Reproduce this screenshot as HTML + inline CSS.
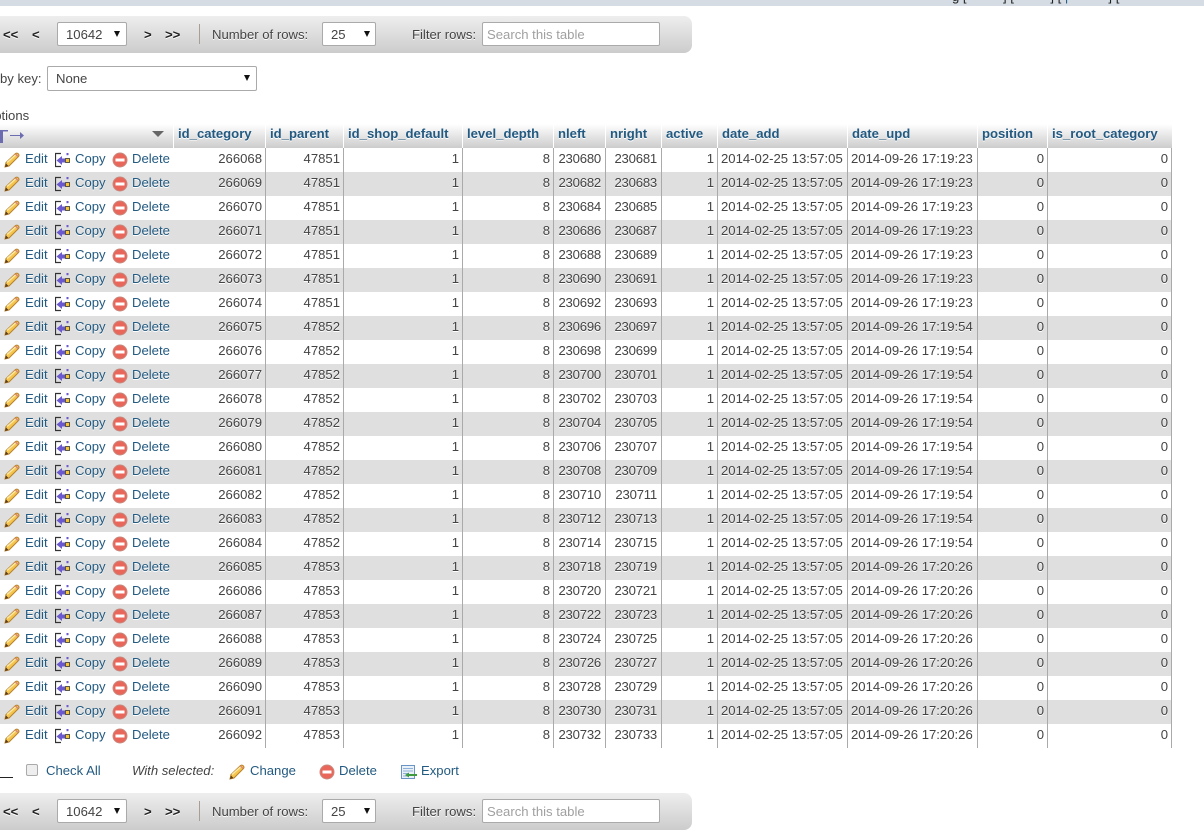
<!DOCTYPE html>
<html>
<head>
<meta charset="utf-8">
<style>
html,body{margin:0;padding:0;background:#fff;}
body{width:1204px;height:832px;overflow:hidden;position:relative;font-family:"Liberation Sans",Arial,sans-serif;font-size:13.12px;color:#444;}
.top{position:absolute;left:0;top:0;width:1204px;height:6px;background:#d5dce4;overflow:hidden;}
.nav{position:absolute;left:-10px;width:702px;height:37px;background:linear-gradient(#eeeeee,#cccccc);border-radius:0 8px 8px 0;}
.a{position:absolute;white-space:nowrap;line-height:16px;}
.b{font-weight:bold;color:#222;text-shadow:0 1px 0 #fff;}
.sel{position:absolute;box-sizing:border-box;background:#fff;border:1px solid #aaa;border-radius:2px;height:24px;line-height:24px;color:#444;padding-left:8px;}
.sel i{position:absolute;top:8px;width:0;height:0;border-left:3px solid transparent;border-right:3px solid transparent;border-top:6px solid #111;}
.sh{text-shadow:0 1px 0 #fff;}
table{position:absolute;left:0;top:124px;border-collapse:separate;border-spacing:0;table-layout:fixed;width:1172px;}
th{height:24px;box-sizing:border-box;padding:0 4px;text-align:left;font-weight:bold;color:#235a81;background:linear-gradient(#ffffff,#cccccc);border-right:1px solid #fff;white-space:nowrap;overflow:hidden;font-size:13.12px;vertical-align:middle;padding-bottom:6px;text-shadow:0 1px 0 #fff;}
th.l{border-right:0;}
td{height:24px;box-sizing:border-box;padding:0 3px 4px 0;text-align:right;border-right:1px solid #aaa;white-space:nowrap;color:#444;text-shadow:0 1px 0 #fff;vertical-align:middle;}
td.o{border-right:1px solid transparent;position:relative;padding:0;}
td.o svg{position:absolute;top:4px;width:16px;height:16px;}
td.o svg:nth-of-type(1){left:4px;}
td.o svg:nth-of-type(2){left:55px;}
td.o svg:nth-of-type(3){left:112px;}
td.o span{position:absolute;top:3px;color:#235a81;line-height:16px;}
td.o span:nth-of-type(1){left:25px;}
td.o span:nth-of-type(2){left:75px;}
td.o span:nth-of-type(3){left:132px;}
tbody tr:nth-child(odd) td{background:#fff;}
tbody tr:nth-child(even) td{background:#dfdfdf;}
td.d{text-align:left;padding-left:3px;padding-right:0;}
td.n{padding-right:4px;letter-spacing:-.2px;}
.lnk{color:#235a81;}
</style>
</head>
<body>
<svg width="0" height="0" style="position:absolute">
<defs>
<symbol id="pen" viewBox="0 0 16 16">
<path d="M1 15 L2 10.5 L11.5 1.5 Q13 .5 14.5 2 Q15.5 3.500 14.500 4.500 L5 14 Z" fill="#f5c64f" stroke="#b8802a" stroke-width="1"/>
<path d="M3 10.500 L12 2.500" stroke="#fbe9a8" stroke-width="1.500"/>
<path d="M1 15 L2 11.500 L4.500 14 Z" fill="#5a3d1a"/>
<path d="M11.500 2 L14 4.500" stroke="#d98a7a" stroke-width="1.500"/>
</symbol>
<symbol id="cp" viewBox="0 0 16 16">
<path d="M6 1.500 H.5 V14.500 H6" fill="none" stroke="#333" stroke-width="1.200"/>
<path d="M1.500 8.500 L7 4 V6.500 H10 V10.500 H7 V13 Z" fill="#6a5acd"/>
<rect x="10.500" y="6.500" width="4" height="4" fill="#f4c531" stroke="#333" stroke-width=".8"/>
<rect x="11.500" y="1" width="2" height="2.200" fill="#6a5acd"/>
</symbol>
<symbol id="del" viewBox="0 0 16 16">
<circle cx="8" cy="8" r="7" fill="#e8665a" stroke="#c9897e" stroke-width="1"/>
<rect x="3.500" y="6.500" width="9" height="3" fill="#fff"/>
</symbol>
<symbol id="exp" viewBox="0 0 16 16">
<rect x=".5" y="1.500" width="13" height="13" fill="#e8f0f8" stroke="#6b93c4"/>
<path d="M2 4.500 H12 M2 7 H12 M2 9.500 H7 M2 12 H7" stroke="#8fb0d8"/>
<path d="M4 11 L8 8.500 V10 H16 V12 H8 V13.500 Z" fill="#3f9a3f"/>
</symbol>
</defs>
</svg>

<div class="top"><div class="a" style="left:952px;top:-11px;color:#222;white-space:pre;">g [          ] [          ] [<span style="color:#235a81"> |           </span>] [</div></div>

<div class="nav" style="top:16px"></div>
<div class="a b" style="left:3px;top:27px">&lt;&lt;</div>
<div class="a b" style="left:32px;top:27px">&lt;</div>
<div class="sel" style="left:57px;top:22px;width:70px;">10642<i style="left:56px"></i></div>
<div class="a b" style="left:144px;top:27px">&gt;</div>
<div class="a b" style="left:165px;top:27px">&gt;&gt;</div>
<div class="a" style="left:199px;top:24px;width:1px;height:20px;background:#a89f94"></div>
<div class="a sh" style="left:212px;top:27px">Number of rows:</div>
<div class="sel" style="left:322px;top:22px;width:54px;">25<i style="left:41px"></i></div>
<div class="a sh" style="left:412px;top:27px">Filter rows:</div>
<div class="sel" style="left:482px;top:22px;width:178px;padding-left:4px;color:#a0a0a0;">Search this table</div>

<div class="a" style="left:0;top:71px;">by key:</div>
<div class="sel" style="left:47px;top:66px;width:210px;height:25px;line-height:23px;">None<i style="left:196px"></i></div>
<div class="a" style="left:-16px;top:108px;color:#444;">Options</div>

<table>
<colgroup><col style="width:174px"><col style="width:92px"><col style="width:78px"><col style="width:119px"><col style="width:91px"><col style="width:52px"><col style="width:56px"><col style="width:56px"><col style="width:130px"><col style="width:130px"><col style="width:70px"><col style="width:124px"></colgroup>
<thead><tr>
<th style="position:relative"><svg style="position:absolute;left:152px;top:7px" width="12" height="6" viewBox="0 0 12 6"><path d="M0 0 H12 L6 6 Z" fill="#666"/></svg></th>
<th>id_category</th><th>id_parent</th><th>id_shop_default</th><th>level_depth</th><th>nleft</th><th>nright</th><th>active</th><th>date_add</th><th>date_upd</th><th>position</th><th class="l">is_root_category</th>
</tr></thead>
<tbody>
<tr><td class="o"><svg><use href="#pen"/></svg><span>Edit</span><svg><use href="#cp"/></svg><span>Copy</span><svg><use href="#del"/></svg><span>Delete</span></td><td>266068</td><td>47851</td><td>1</td><td>8</td><td class="n">230680</td><td class="n">230681</td><td>1</td><td class="d">2014-02-25 13:57:05</td><td class="d">2014-09-26 17:19:23</td><td>0</td><td>0</td></tr>
<tr><td class="o"><svg><use href="#pen"/></svg><span>Edit</span><svg><use href="#cp"/></svg><span>Copy</span><svg><use href="#del"/></svg><span>Delete</span></td><td>266069</td><td>47851</td><td>1</td><td>8</td><td class="n">230682</td><td class="n">230683</td><td>1</td><td class="d">2014-02-25 13:57:05</td><td class="d">2014-09-26 17:19:23</td><td>0</td><td>0</td></tr>
<tr><td class="o"><svg><use href="#pen"/></svg><span>Edit</span><svg><use href="#cp"/></svg><span>Copy</span><svg><use href="#del"/></svg><span>Delete</span></td><td>266070</td><td>47851</td><td>1</td><td>8</td><td class="n">230684</td><td class="n">230685</td><td>1</td><td class="d">2014-02-25 13:57:05</td><td class="d">2014-09-26 17:19:23</td><td>0</td><td>0</td></tr>
<tr><td class="o"><svg><use href="#pen"/></svg><span>Edit</span><svg><use href="#cp"/></svg><span>Copy</span><svg><use href="#del"/></svg><span>Delete</span></td><td>266071</td><td>47851</td><td>1</td><td>8</td><td class="n">230686</td><td class="n">230687</td><td>1</td><td class="d">2014-02-25 13:57:05</td><td class="d">2014-09-26 17:19:23</td><td>0</td><td>0</td></tr>
<tr><td class="o"><svg><use href="#pen"/></svg><span>Edit</span><svg><use href="#cp"/></svg><span>Copy</span><svg><use href="#del"/></svg><span>Delete</span></td><td>266072</td><td>47851</td><td>1</td><td>8</td><td class="n">230688</td><td class="n">230689</td><td>1</td><td class="d">2014-02-25 13:57:05</td><td class="d">2014-09-26 17:19:23</td><td>0</td><td>0</td></tr>
<tr><td class="o"><svg><use href="#pen"/></svg><span>Edit</span><svg><use href="#cp"/></svg><span>Copy</span><svg><use href="#del"/></svg><span>Delete</span></td><td>266073</td><td>47851</td><td>1</td><td>8</td><td class="n">230690</td><td class="n">230691</td><td>1</td><td class="d">2014-02-25 13:57:05</td><td class="d">2014-09-26 17:19:23</td><td>0</td><td>0</td></tr>
<tr><td class="o"><svg><use href="#pen"/></svg><span>Edit</span><svg><use href="#cp"/></svg><span>Copy</span><svg><use href="#del"/></svg><span>Delete</span></td><td>266074</td><td>47851</td><td>1</td><td>8</td><td class="n">230692</td><td class="n">230693</td><td>1</td><td class="d">2014-02-25 13:57:05</td><td class="d">2014-09-26 17:19:23</td><td>0</td><td>0</td></tr>
<tr><td class="o"><svg><use href="#pen"/></svg><span>Edit</span><svg><use href="#cp"/></svg><span>Copy</span><svg><use href="#del"/></svg><span>Delete</span></td><td>266075</td><td>47852</td><td>1</td><td>8</td><td class="n">230696</td><td class="n">230697</td><td>1</td><td class="d">2014-02-25 13:57:05</td><td class="d">2014-09-26 17:19:54</td><td>0</td><td>0</td></tr>
<tr><td class="o"><svg><use href="#pen"/></svg><span>Edit</span><svg><use href="#cp"/></svg><span>Copy</span><svg><use href="#del"/></svg><span>Delete</span></td><td>266076</td><td>47852</td><td>1</td><td>8</td><td class="n">230698</td><td class="n">230699</td><td>1</td><td class="d">2014-02-25 13:57:05</td><td class="d">2014-09-26 17:19:54</td><td>0</td><td>0</td></tr>
<tr><td class="o"><svg><use href="#pen"/></svg><span>Edit</span><svg><use href="#cp"/></svg><span>Copy</span><svg><use href="#del"/></svg><span>Delete</span></td><td>266077</td><td>47852</td><td>1</td><td>8</td><td class="n">230700</td><td class="n">230701</td><td>1</td><td class="d">2014-02-25 13:57:05</td><td class="d">2014-09-26 17:19:54</td><td>0</td><td>0</td></tr>
<tr><td class="o"><svg><use href="#pen"/></svg><span>Edit</span><svg><use href="#cp"/></svg><span>Copy</span><svg><use href="#del"/></svg><span>Delete</span></td><td>266078</td><td>47852</td><td>1</td><td>8</td><td class="n">230702</td><td class="n">230703</td><td>1</td><td class="d">2014-02-25 13:57:05</td><td class="d">2014-09-26 17:19:54</td><td>0</td><td>0</td></tr>
<tr><td class="o"><svg><use href="#pen"/></svg><span>Edit</span><svg><use href="#cp"/></svg><span>Copy</span><svg><use href="#del"/></svg><span>Delete</span></td><td>266079</td><td>47852</td><td>1</td><td>8</td><td class="n">230704</td><td class="n">230705</td><td>1</td><td class="d">2014-02-25 13:57:05</td><td class="d">2014-09-26 17:19:54</td><td>0</td><td>0</td></tr>
<tr><td class="o"><svg><use href="#pen"/></svg><span>Edit</span><svg><use href="#cp"/></svg><span>Copy</span><svg><use href="#del"/></svg><span>Delete</span></td><td>266080</td><td>47852</td><td>1</td><td>8</td><td class="n">230706</td><td class="n">230707</td><td>1</td><td class="d">2014-02-25 13:57:05</td><td class="d">2014-09-26 17:19:54</td><td>0</td><td>0</td></tr>
<tr><td class="o"><svg><use href="#pen"/></svg><span>Edit</span><svg><use href="#cp"/></svg><span>Copy</span><svg><use href="#del"/></svg><span>Delete</span></td><td>266081</td><td>47852</td><td>1</td><td>8</td><td class="n">230708</td><td class="n">230709</td><td>1</td><td class="d">2014-02-25 13:57:05</td><td class="d">2014-09-26 17:19:54</td><td>0</td><td>0</td></tr>
<tr><td class="o"><svg><use href="#pen"/></svg><span>Edit</span><svg><use href="#cp"/></svg><span>Copy</span><svg><use href="#del"/></svg><span>Delete</span></td><td>266082</td><td>47852</td><td>1</td><td>8</td><td class="n">230710</td><td class="n">230711</td><td>1</td><td class="d">2014-02-25 13:57:05</td><td class="d">2014-09-26 17:19:54</td><td>0</td><td>0</td></tr>
<tr><td class="o"><svg><use href="#pen"/></svg><span>Edit</span><svg><use href="#cp"/></svg><span>Copy</span><svg><use href="#del"/></svg><span>Delete</span></td><td>266083</td><td>47852</td><td>1</td><td>8</td><td class="n">230712</td><td class="n">230713</td><td>1</td><td class="d">2014-02-25 13:57:05</td><td class="d">2014-09-26 17:19:54</td><td>0</td><td>0</td></tr>
<tr><td class="o"><svg><use href="#pen"/></svg><span>Edit</span><svg><use href="#cp"/></svg><span>Copy</span><svg><use href="#del"/></svg><span>Delete</span></td><td>266084</td><td>47852</td><td>1</td><td>8</td><td class="n">230714</td><td class="n">230715</td><td>1</td><td class="d">2014-02-25 13:57:05</td><td class="d">2014-09-26 17:19:54</td><td>0</td><td>0</td></tr>
<tr><td class="o"><svg><use href="#pen"/></svg><span>Edit</span><svg><use href="#cp"/></svg><span>Copy</span><svg><use href="#del"/></svg><span>Delete</span></td><td>266085</td><td>47853</td><td>1</td><td>8</td><td class="n">230718</td><td class="n">230719</td><td>1</td><td class="d">2014-02-25 13:57:05</td><td class="d">2014-09-26 17:20:26</td><td>0</td><td>0</td></tr>
<tr><td class="o"><svg><use href="#pen"/></svg><span>Edit</span><svg><use href="#cp"/></svg><span>Copy</span><svg><use href="#del"/></svg><span>Delete</span></td><td>266086</td><td>47853</td><td>1</td><td>8</td><td class="n">230720</td><td class="n">230721</td><td>1</td><td class="d">2014-02-25 13:57:05</td><td class="d">2014-09-26 17:20:26</td><td>0</td><td>0</td></tr>
<tr><td class="o"><svg><use href="#pen"/></svg><span>Edit</span><svg><use href="#cp"/></svg><span>Copy</span><svg><use href="#del"/></svg><span>Delete</span></td><td>266087</td><td>47853</td><td>1</td><td>8</td><td class="n">230722</td><td class="n">230723</td><td>1</td><td class="d">2014-02-25 13:57:05</td><td class="d">2014-09-26 17:20:26</td><td>0</td><td>0</td></tr>
<tr><td class="o"><svg><use href="#pen"/></svg><span>Edit</span><svg><use href="#cp"/></svg><span>Copy</span><svg><use href="#del"/></svg><span>Delete</span></td><td>266088</td><td>47853</td><td>1</td><td>8</td><td class="n">230724</td><td class="n">230725</td><td>1</td><td class="d">2014-02-25 13:57:05</td><td class="d">2014-09-26 17:20:26</td><td>0</td><td>0</td></tr>
<tr><td class="o"><svg><use href="#pen"/></svg><span>Edit</span><svg><use href="#cp"/></svg><span>Copy</span><svg><use href="#del"/></svg><span>Delete</span></td><td>266089</td><td>47853</td><td>1</td><td>8</td><td class="n">230726</td><td class="n">230727</td><td>1</td><td class="d">2014-02-25 13:57:05</td><td class="d">2014-09-26 17:20:26</td><td>0</td><td>0</td></tr>
<tr><td class="o"><svg><use href="#pen"/></svg><span>Edit</span><svg><use href="#cp"/></svg><span>Copy</span><svg><use href="#del"/></svg><span>Delete</span></td><td>266090</td><td>47853</td><td>1</td><td>8</td><td class="n">230728</td><td class="n">230729</td><td>1</td><td class="d">2014-02-25 13:57:05</td><td class="d">2014-09-26 17:20:26</td><td>0</td><td>0</td></tr>
<tr><td class="o"><svg><use href="#pen"/></svg><span>Edit</span><svg><use href="#cp"/></svg><span>Copy</span><svg><use href="#del"/></svg><span>Delete</span></td><td>266091</td><td>47853</td><td>1</td><td>8</td><td class="n">230730</td><td class="n">230731</td><td>1</td><td class="d">2014-02-25 13:57:05</td><td class="d">2014-09-26 17:20:26</td><td>0</td><td>0</td></tr>
<tr><td class="o"><svg><use href="#pen"/></svg><span>Edit</span><svg><use href="#cp"/></svg><span>Copy</span><svg><use href="#del"/></svg><span>Delete</span></td><td>266092</td><td>47853</td><td>1</td><td>8</td><td class="n">230732</td><td class="n">230733</td><td>1</td><td class="d">2014-02-25 13:57:05</td><td class="d">2014-09-26 17:20:26</td><td>0</td><td>0</td></tr>
</tbody>
</table>

<svg class="a" style="left:0;top:128px;z-index:2" width="26" height="18" viewBox="0 0 26 18">
<path d="M0 2 H8 V3.500 H3 V15 H0 Z" fill="#6c6cb0"/>
<path d="M10 7.500 H23" stroke="#6c6cb0" stroke-width="1"/>
<path d="M20 4 L24 7.500 L20 11 Z" fill="#6c6cb0"/>
</svg>

<div class="a" style="left:0;top:777px;width:13px;height:1px;background:#222"></div>
<div class="a" style="left:26px;top:764px;width:12px;height:12px;box-sizing:border-box;border:1px solid #aaa;border-radius:2px;background:#eee"></div>
<div class="a lnk" style="left:46px;top:763px">Check All</div>
<div class="a" style="left:132px;top:763px;font-style:italic">With selected:</div>
<svg class="a" style="left:229px;top:764px" width="16" height="16"><use href="#pen"/></svg>
<div class="a lnk" style="left:250px;top:763px">Change</div>
<svg class="a" style="left:319px;top:764px" width="16" height="16"><use href="#del"/></svg>
<div class="a lnk" style="left:339px;top:763px">Delete</div>
<svg class="a" style="left:401px;top:764px" width="16" height="16"><use href="#exp"/></svg>
<div class="a lnk" style="left:421px;top:763px">Export</div>

<div class="nav" style="top:793px"></div>
<div class="a b" style="left:3px;top:804px">&lt;&lt;</div>
<div class="a b" style="left:32px;top:804px">&lt;</div>
<div class="sel" style="left:57px;top:799px;width:70px;">10642<i style="left:56px"></i></div>
<div class="a b" style="left:144px;top:804px">&gt;</div>
<div class="a b" style="left:165px;top:804px">&gt;&gt;</div>
<div class="a" style="left:199px;top:801px;width:1px;height:20px;background:#a89f94"></div>
<div class="a sh" style="left:212px;top:804px">Number of rows:</div>
<div class="sel" style="left:322px;top:799px;width:54px;">25<i style="left:41px"></i></div>
<div class="a sh" style="left:412px;top:804px">Filter rows:</div>
<div class="sel" style="left:482px;top:799px;width:178px;padding-left:4px;color:#a0a0a0;">Search this table</div>
</body>
</html>
